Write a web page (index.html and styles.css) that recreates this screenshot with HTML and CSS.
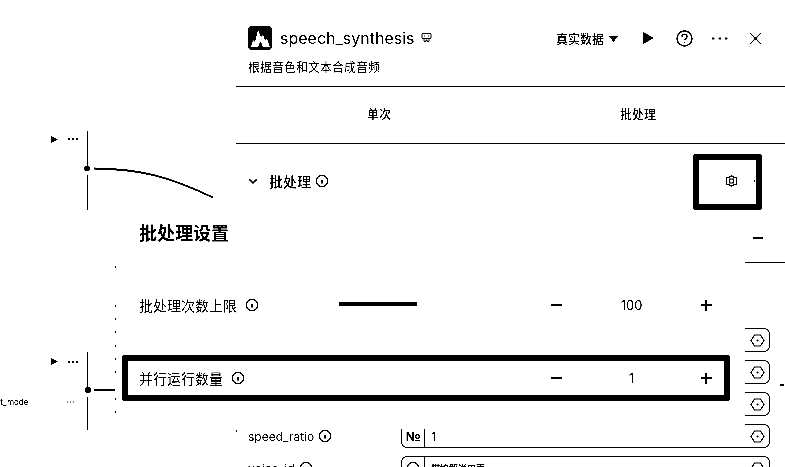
FILE: index.html
```html
<!DOCTYPE html>
<html>
<head>
	<meta charset="UTF-8">
	<title>speech_synthesis</title>
	<link rel="stylesheet" href="styles.css">
</head>
<body>
	<div id="stage">
		<!-- canvas behind the panel -->
		<svg class="wires" width="240" height="467" viewBox="0 0 240 467">
			<path d="M51 136l7 3.500-7 3.500z" fill="#000"/>
			<path d="M68 139h2M72 139h2M76 139h2" stroke="#000" stroke-width="2"/>
			<path d="M87.500 131v35M87.500 175v35" stroke="#000"/>
			<circle cx="87" cy="168.500" r="3" fill="#000"/>
			<path d="M94 168.500c45 0 75 8 119 29" stroke="#000" stroke-width="1.800" fill="none"/>
			<path d="M51 358l7 3.500-7 3.500z" fill="#000"/>
			<path d="M68 362h2M72 362h2M76 362h2" stroke="#000" stroke-width="1.500"/>
			<path d="M87.500 352v35M87.500 397v33" stroke="#000"/>
			<circle cx="88" cy="390" r="3" fill="#000"/>
			<path d="M94 390h21" stroke="#000" stroke-width="2"/>
			<path d="M67 402h1M70 402h1M73 402h1" stroke="#000"/>
			<path d="M115 267h1M115 306h1M115 319h1M115 332h1M115 346h1M115 359h1M115 372h1M115 399h1M115 412h1M236 431h1" stroke="#000" stroke-width="1.500"/>
		</svg>
		<span class="node-label">rt_mode</span>

		<div class="panel">
			<div class="head">
				<div class="logo">
					<svg width="24" height="24" viewBox="0 0 24 24"><rect width="24" height="24" rx="4" fill="#000"/><path d="M3 21l2-7 2 2 3-12 3 7 2-2 2 5 2-1 3 8h-7l-2.500-6-2.500 6z" fill="#fff"/></svg>
				</div>
				<span class="app-name">speech_synthesis</span>
				<svg class="file-ico" width="11" height="10" viewBox="0 0 11 10"><path d="M1 .500h9v5H1zM3 5.500v3h2V7h1v1.500h2v-3M3 3h1M7 3h1" fill="none" stroke="#000"/></svg>
				<div class="tools">
					<span class="mode">真实数据</span>
					<svg class="caret" width="9" height="6" viewBox="0 0 9 6"><path d="M0 0h9l-4.500 6z" fill="#000"/></svg>
					<svg class="play" width="11" height="12" viewBox="0 0 11 12"><path d="M0 0l11 6-11 6z" fill="#000"/></svg>
					<svg class="help" width="17" height="17" viewBox="0 0 17 17"><circle cx="8.500" cy="8.500" r="7.500" fill="none" stroke="#000" stroke-width="1.400"/><path d="M6 6.700c0-3.200 5-3.200 5 0 0 1.800-2.500 1.800-2.500 3.600" fill="none" stroke="#000" stroke-width="1.400"/><path d="M7.800 11.600h1.500v1.500H7.800z" fill="#000"/></svg>
					<svg class="more" width="16" height="3" viewBox="0 0 16 3"><path d="M0 .500h2.500v2H0zM6.500 .500h2.500v2H6.500zM13 .500h2.500v2H13z" fill="#000"/></svg>
					<svg class="close" width="13" height="13" viewBox="0 0 13 13"><path d="M1 1l11 11M12 1L1 12" stroke="#000" stroke-width="1.300"/></svg>
				</div>
			</div>
			<p class="desc">根据音色和文本合成音频</p>

			<div class="tabs">
				<div class="tab">单次</div>
				<div class="tab">批处理</div>
			</div>

			<div class="batch-row">
				<svg width="10" height="7" viewBox="0 0 10 7"><path d="M1 1l4 4 4-4" fill="none" stroke="#000" stroke-width="1.500"/></svg>
				<span class="batch-name">批处理</span>
				<svg class="info" width="14" height="14" viewBox="0 0 14 14"><use href="#i-info"/></svg>
				<div class="mark">
					<svg width="11" height="12" viewBox="0 0 11 12"><path d="M5.500.5l2 1.700 2.800.5v6.600l-2.800.5-2 1.700-2-1.700-2.800-.5V2.700l2.800-.5z" fill="none" stroke="#000" stroke-width="1.200"/><path d="M3.500 4h4v4h-4z" fill="none" stroke="#000" stroke-width="1.200"/></svg>
					<span class="mark-dots"></span>
				</div>
			</div>

			<div class="section-head"><span class="collapse"></span></div>

			<div class="fields">
				<div class="field-row"><div class="field"><svg class="hex" width="15" height="15" viewBox="0 0 15 15"><use href="#i-hex"/></svg></div></div>
				<div class="field-row"><div class="field"><svg class="hex" width="15" height="15" viewBox="0 0 15 15"><use href="#i-hex"/></svg></div></div>
				<div class="field-row"><div class="field"><svg class="hex" width="15" height="15" viewBox="0 0 15 15"><use href="#i-hex"/></svg></div></div>
				<div class="field-row">
					<span class="field-name">speed_ratio</span>
					<svg class="info" width="14" height="14" viewBox="0 0 14 14"><use href="#i-info"/></svg>
					<div class="field">
						<span class="type">N<u>o</u></span>
						<span class="value">1</span>
						<svg class="hex" width="15" height="15" viewBox="0 0 15 15"><use href="#i-hex"/></svg>
					</div>
				</div>
				<div class="field-row">
					<span class="field-name">voice_id</span>
					<svg class="info" width="14" height="14" viewBox="0 0 14 14"><use href="#i-info"/></svg>
					<div class="field">
						<span class="type"><svg width="14" height="14" viewBox="0 0 14 14"><use href="#i-info"/></svg></span>
						<span class="value small">猫娘解说用声</span>
						<svg class="hex" width="15" height="15" viewBox="0 0 15 15"><use href="#i-hex"/></svg>
					</div>
				</div>
			</div>
		</div>

		<span class="tick"></span>

		<!-- settings dialog sits over the panel -->
		<div class="dialog">
			<h2 class="dialog-title">批处理设置</h2>
			<div class="set-row">
				<span class="set-name">批处理次数上限</span>
				<svg class="info" width="14" height="14" viewBox="0 0 14 14"><use href="#i-info"/></svg>
				<span class="slider"></span>
				<div class="stepper"><span class="minus"></span><span class="num">100</span><span class="plus"></span></div>
			</div>
			<div class="set-row marked">
				<span class="set-name">并行运行数量</span>
				<svg class="info" width="14" height="14" viewBox="0 0 14 14"><use href="#i-info"/></svg>
				<div class="stepper"><span class="minus"></span><span class="num">1</span><span class="plus"></span></div>
			</div>
		</div>

		<svg width="0" height="0" class="defs">
			<symbol id="i-info" viewBox="0 0 14 14"><circle cx="7" cy="7" r="5.700" fill="none" stroke="#000" stroke-width="1.300"/><path d="M6 5.800h2v3.700H6z" fill="#000"/></symbol>
			<symbol id="i-hex" viewBox="0 0 15 15"><path d="M4.500 2h6l3.500 5.500L10.500 13h-6L1 7.500z" fill="none" stroke="#000" stroke-width="1.200"/><path d="M6.500 6.500h2v2h-2z" fill="#000"/></symbol>
		</svg>
	</div>
</body>
</html>
```

FILE: styles.css
```css
html, body{margin: 0; background: #fff;}
#stage{position: relative; width: 785px; height: 467px; overflow: hidden; background: #fff; color: #000;
	font-family: Inter, "Noto Sans CJK SC", sans-serif; filter: grayscale(1) contrast(6);}
svg{display: block; flex: none;}
.defs{position: absolute;}
.wires{position: absolute; left: 0; top: 0;}
.node-label{position: absolute; left: -3px; top: 397px; font-size: 8px; line-height: 10px; font-weight: 500;}

.panel{margin-left: 236px; height: 467px; display: flex; flex-direction: column;}
.panel > *{flex: none;}
.head{display: flex; align-items: center; height: 24px; margin-top: 26px; padding-left: 12px;}
.logo{margin-right: 8px;}
.app-name{font-size: 16px; line-height: 24px; font-weight: 400;}
.file-ico{margin-left: 7px;}
.tools{display: flex; align-items: center; margin-left: auto; padding-right: 23px;}
.mode{font-size: 12px; font-weight: 500;}
.caret{margin-left: 5px; margin-top: 2px;}
.play{margin-left: 25px;}
.help{margin-left: 22px;}
.more{margin-left: 19px;}
.close{margin-left: 21px;}
.desc{margin: 9px 0 0 12px; font-size: 12px; line-height: 18px; height: 18px;}
.tabs{display: flex; height: 56px; margin-top: 9px; border-top: 1px solid #000; border-bottom: 1px solid #000;}
.tab{font-size: 12px; font-weight: 500; display: flex; align-items: center; justify-content: center; width: 286px; padding-bottom: 4px;}
.tab + .tab{width: 232px;}
.batch-row{display: flex; align-items: center; height: 74px; padding-left: 12px; position: relative;}
.batch-name{margin-left: 11px; font-size: 14px; font-weight: 500;}
.batch-row .info{margin-left: 4px;}
.mark{position: absolute; left: 457px; top: 10px; width: 57px; height: 44px; border: 6px solid #000; border-radius: 2px;}
.mark svg{position: absolute; left: 27px; top: 15px;}
.mark-dots{position: absolute; left: 55px; top: 20px; width: 1px; height: 2px; border-left: 1px solid #000; border-right: 1px solid #000;}

.section-head{height: 44px; border-bottom: 1px solid #000; margin-left: 509px; position: relative;}
.collapse{position: absolute; left: 8px; top: 19px; width: 10px; height: 2px; background: #000;}

.fields{display: flex; flex-direction: column; gap: 8px; margin-top: 65px;}
.field-row{display: flex; align-items: center; height: 24px; padding-left: 12px; position: relative;}
.field-name{font-size: 12px;}
.field-row .info{margin-left: 4px;}
.field{position: absolute; left: 165px; width: 369px; height: 24px; box-sizing: border-box; border: 1px solid #000; border-radius: 6px;
	display: flex; align-items: center;}
.field .hex{margin-left: auto; margin-right: 4px;}
.type{width: 22px; height: 22px; border-right: 1px solid #000; display: flex; align-items: center; justify-content: center;
	font-size: 12px; font-weight: 700;}
.type u{font-size: 9px; margin-bottom: 2px;}
.value{margin-left: 6px; font-size: 12px; font-weight: 600;}
.value.small{font-size: 9px;}

.tick{position: absolute; left: 780px; top: 384px; width: 4px; height: 2px; background: #000;}

.dialog{position: absolute; left: 116px; top: 210px; width: 629px; height: 219px; background: #fff;}
.dialog-title{margin: 12px 0 0 23px; font-size: 18px; line-height: 24px; font-weight: 700; height: 24px;}
.set-row{position: relative; display: flex; align-items: center; box-sizing: border-box; width: 608px; height: 46px; margin-left: 6px;
	padding-left: 11px; border: 6px solid transparent; border-radius: 3px;}
.dialog-title + .set-row{margin-top: 36px;}
.set-row + .set-row{margin-top: 27px;}
.marked{border-color: #000;}
.set-name{font-size: 14px;}
.set-row .info{margin-left: 8px;}
.slider{position: absolute; left: 211px; top: 14px; width: 78px; height: 4px; background: #000;}
.stepper{position: absolute; left: 423px; top: 0; width: 161px; height: 34px; display: flex; align-items: center; justify-content: space-between;}
.minus{position: relative; width: 11px; height: 2px; background: #000;}
.plus{position: relative; width: 11px; height: 2px; background: #000;}
.plus::after{content: ""; position: absolute; left: 4.500px; top: -4.500px; width: 2px; height: 11px; background: #000;}
.num{font-size: 13px; font-weight: 400;}
```
